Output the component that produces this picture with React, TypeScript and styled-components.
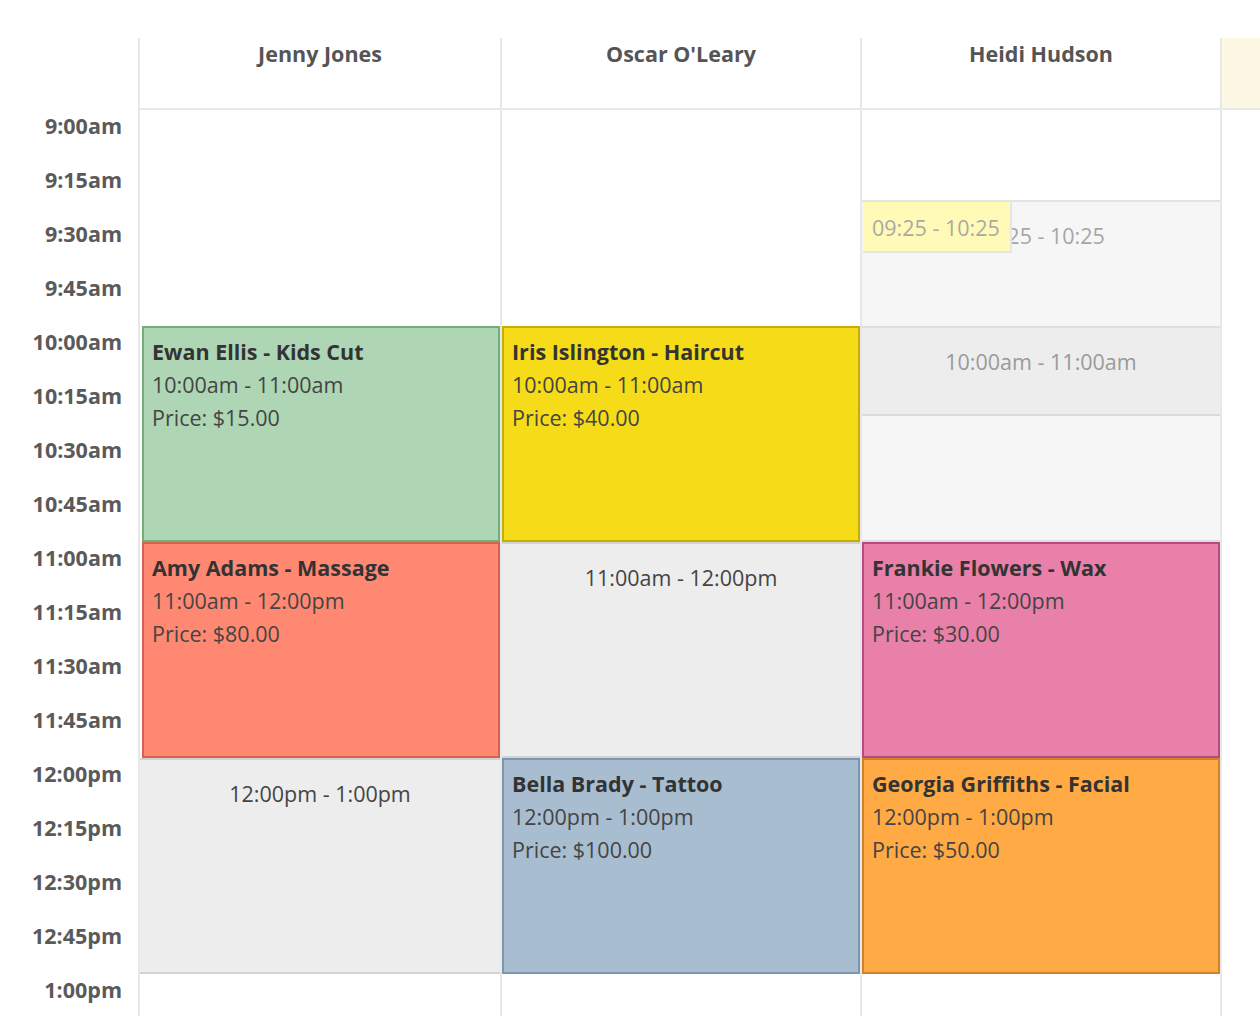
import React from "react"
import styled, { createGlobalStyle } from "styled-components"

const SLOT = 54
const HOUR = SLOT * 4
const START = 9 * 60

const GlobalStyle = createGlobalStyle`
  html, body {
    margin: 0;
    padding: 0;
    overflow: hidden;
    background: #ffffff;
  }
  body {
    font-family: "Open Sans", "Liberation Sans", sans-serif;
  }
`

const Page = styled.div`
  display: flex;
  flex-flow: row nowrap;
  padding-top: 38px;
  width: 1600px;
  height: 1016px;
  box-sizing: border-box;
  overflow: hidden;
`

const Gutter = styled.div`
  flex: 0 0 138px;
  display: flex;
  flex-flow: column nowrap;
`

const GutterHead = styled.div`
  height: 72px;
  flex: 0 0 72px;
`

const TimeLabel = styled.div`
  height: ${SLOT}px;
  flex: 0 0 ${SLOT}px;
  padding-right: 16px;
  text-align: right;
  font-size: 21.5px;
  font-weight: 700;
  line-height: 32px;
  color: #5a5a5a;
`

const Column = styled.div<{ $first?: boolean }>`
  flex: 0 0 ${(p) => (p.$first ? 362 : 360)}px;
  display: flex;
  flex-flow: column nowrap;
  border-left: 2px solid #e8e8e8;
  box-sizing: border-box;
`

const ColumnHead = styled.div<{ $today?: boolean }>`
  height: 72px;
  flex: 0 0 72px;
  border-bottom: 2px solid #e8e8e8;
  background: ${(p) => (p.$today ? "#fcf8e3" : "#ffffff")};
  text-align: center;
  font-size: 21.5px;
  font-weight: 700;
  line-height: 32px;
  box-sizing: border-box;
  color: #555555;
`

const ColumnBody = styled.div`
  position: relative;
  flex: 1 1 auto;
`

const Event = styled.div<{ $bg: string; $line: string; $inset: number }>`
  position: absolute;
  left: ${(p) => p.$inset}px;
  width: 358px;
  box-sizing: border-box;
  padding: 8px 8px;
  background: ${(p) => p.$bg};
  border: 2px solid ${(p) => p.$line};
  font-size: 21.5px;
  line-height: 33px;
  color: #444444;
`

const EventTitle = styled.div`
  font-weight: 700;
  color: #333333;
  line-height: 32px;
`

const Blocked = styled.div<{ $bg: string; $line: string; $ink: string }>`
  position: absolute;
  left: 0;
  right: 0;
  box-sizing: border-box;
  padding-top: 18px;
  background: ${(p) => p.$bg};
  border-top: 2px solid ${(p) => p.$line};
  border-bottom: 2px solid ${(p) => p.$line};
  text-align: center;
  font-size: 21.5px;
  line-height: 32px;
  color: ${(p) => p.$ink};
`

const Tip = styled.div`
  position: absolute;
  left: 1px;
  top: 92px;
  padding: 10px 10px 7px 9px;
  background: #fffbb6;
  border-right: 2px solid #e6e6e6;
  border-bottom: 2px solid #e6e6e6;
  font-size: 21.5px;
  line-height: 32px;
  color: #a9a9a9;
  z-index: 3;
`

type Appt = {
  start: number
  end: number
  title: string
  time: string
  price: string
  bg: string
  line: string
}

type Block = {
  start: number
  end: number
  label: string
  bg: string
  line: string
  ink: string
}

type Resource = {
  name: string
  appts: Appt[]
  blocks: Block[]
  tip?: string
  today?: boolean
}

const m = (h: number, min = 0) => h * 60 + min
const y = (t: number) => ((t - START) / 60) * HOUR

const resources: Resource[] = [
  {
    name: "Jenny Jones",
    appts: [
      { start: m(10), end: m(11), title: "Ewan Ellis - Kids Cut", time: "10:00am - 11:00am", price: "Price: $15.00", bg: "#aed6b4", line: "#72ae78" },
      { start: m(11), end: m(12), title: "Amy Adams - Massage", time: "11:00am - 12:00pm", price: "Price: $80.00", bg: "#ff8873", line: "#d9604f" },
    ],
    blocks: [
      { start: m(12), end: m(13), label: "12:00pm - 1:00pm", bg: "#ededed", line: "#d2d2d2", ink: "#444444" },
    ],
  },
  {
    name: "Oscar O'Leary",
    appts: [
      { start: m(10), end: m(11), title: "Iris Islington - Haircut", time: "10:00am - 11:00am", price: "Price: $40.00", bg: "#f6dc18", line: "#c8ad08" },
      { start: m(12), end: m(13), title: "Bella Brady - Tattoo", time: "12:00pm - 1:00pm", price: "Price: $100.00", bg: "#a8bdd0", line: "#7b96b0" },
    ],
    blocks: [
      { start: m(11), end: m(12), label: "11:00am - 12:00pm", bg: "#ededed", line: "#d2d2d2", ink: "#444444" },
    ],
  },
  {
    name: "Heidi Hudson",
    appts: [
      { start: m(11), end: m(12), title: "Frankie Flowers - Wax", time: "11:00am - 12:00pm", price: "Price: $30.00", bg: "#e880a9", line: "#b64b7f" },
      { start: m(12), end: m(13), title: "Georgia Griffiths - Facial", time: "12:00pm - 1:00pm", price: "Price: $50.00", bg: "#ffaa44", line: "#d08226" },
    ],
    blocks: [
      { start: m(9, 25), end: m(10, 25), label: "09:25 - 10:25", bg: "#f6f6f6", line: "#e4e4e4", ink: "#a6a6a6" },
      { start: m(10), end: m(11), label: "10:00am - 11:00am", bg: "rgba(0, 0, 0, 0.035)", line: "#dedede", ink: "#9a9a9a" },
    ],
    tip: "09:25 - 10:25",
  },
  { name: "", appts: [], blocks: [], today: true },
]

const labels: string[] = []
for (let h = 9; h <= 13; h++) {
  const qs = h === 13 ? [0] : [0, 15, 30, 45]
  qs.forEach((q) => {
    const hh = h > 12 ? h - 12 : h
    labels.push(`${hh}:${q === 0 ? "00" : q}${h >= 12 ? "pm" : "am"}`)
  })
}

function App() {
  return (
    <>
      <GlobalStyle />
      <Page>
        <Gutter>
          <GutterHead />
          {labels.map((l) => (
            <TimeLabel key={l}>{l}</TimeLabel>
          ))}
        </Gutter>
        {resources.map((r, i) => (
          <Column key={i} $first={i === 0}>
            <ColumnHead $today={r.today}>{r.name}</ColumnHead>
            <ColumnBody>
              {r.blocks.map((b) => (
                <Blocked
                  key={b.label}
                  $bg={b.bg}
                  $line={b.line}
                  $ink={b.ink}
                  style={{ top: y(b.start), height: y(b.end) - y(b.start) }}
                >
                  {b.label}
                </Blocked>
              ))}
              {r.appts.map((a) => (
                <Event
                  key={a.title}
                  $bg={a.bg}
                  $line={a.line}
                  $inset={i === 0 ? 2 : 0}
                  style={{ top: y(a.start), height: y(a.end) - y(a.start) }}
                >
                  <EventTitle>{a.title}</EventTitle>
                  <div>{a.time}</div>
                  <div>{a.price}</div>
                </Event>
              ))}
              {r.tip && <Tip>{r.tip}</Tip>}
            </ColumnBody>
          </Column>
        ))}
      </Page>
    </>
  )
}

export default App
